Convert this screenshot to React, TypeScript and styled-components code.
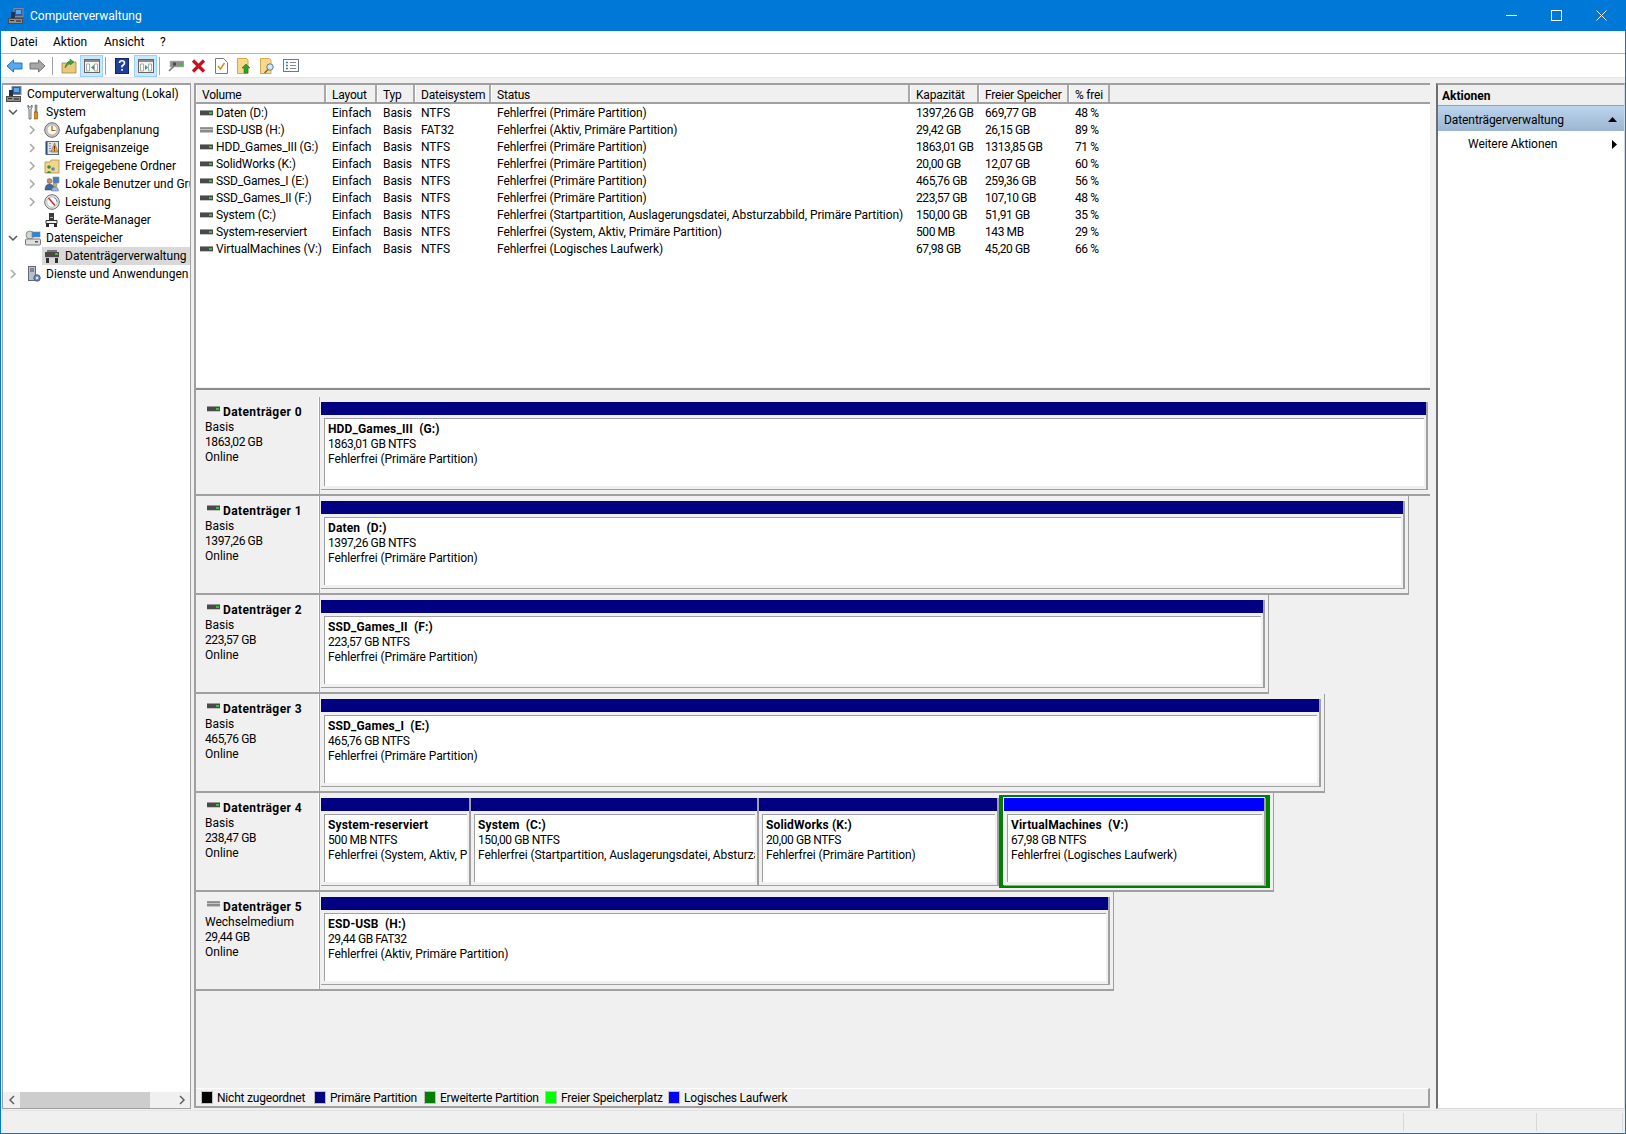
import React from "react";
import styled, { createGlobalStyle } from "styled-components";

const Global = createGlobalStyle`
  html, body { margin: 0; padding: 0; background: #f0f0f0; }
  * { box-sizing: border-box; }
  body { font-family: Roboto, "Liberation Sans", sans-serif; font-size: 12px; color: #000; overflow: hidden; }
`;

const Win = styled.div`
  width: 1626px; height: 1134px; display: flex; flex-direction: column;
  border: 1px solid #0078d7; border-top: 0; background: #f0f0f0;
`;
const TitleBar = styled.div`
  height: 31px; background: #0078d7; color: #fff; display: flex; align-items: center;
  margin: 0 -1px; padding-left: 8px; flex: none;
`;
const TitleText = styled.span` margin-left: 6px; flex: 1; font-size: 12px; `;
const WinBtn = styled.div`
  width: 45px; height: 31px; display: flex; align-items: center; justify-content: center;
`;
const WinBtns = styled.div` display: flex; margin-right: 2px; `;
const MenuBar = styled.div`
  height: 23px; background: #fff; border-bottom: 1px solid #b4b4c0; display: flex; align-items: center;
  padding-left: 9px; flex: none;
`;
const MenuItem = styled.span<{ $w: number }>` width: ${(p) => p.$w}px; `;
const ToolBar = styled.div`
  height: 23px; background: #fff; display: flex; align-items: center; padding-left: 2px; flex: none;
`;
const ToolBtn = styled.div<{ $w?: number; $on?: boolean }>`
  width: ${(p) => p.$w ?? 23}px; height: 22px; display: flex; align-items: center; justify-content: center; flex: none;
  background: ${(p) => (p.$on ? "#cce8ff" : "transparent")};
  border: 1px solid ${(p) => (p.$on ? "#99d1ff" : "transparent")};
`;
const ToolSep = styled.div<{ $l?: number }>` width: 1px; height: 18px; background: #a0a0a0; margin: 0 4px 0 ${(p) => p.$l ?? 2}px; flex: none; `;
const Main = styled.div`
  flex: 1; display: flex; padding: 5px 1px 1px 1px; min-height: 0; border-top: 1px solid #e6e6e6;
`;
const TreePane = styled.div`
  width: 189px; flex: none; display: flex; flex-direction: column; background: #fff;
  border-top: 2px solid #a0a0a0; border-left: 1px solid #a0a0a0; border-right: 1px solid #a0a0a0;
  border-bottom: 1px solid #a0a0a0; overflow: hidden;
`;
const TreeBody = styled.div` flex: 1; min-height: 0; `;
const TreeRow = styled.div<{ $pad: number }>`
  height: 18px; display: flex; align-items: center; padding-left: ${(p) => p.$pad}px; white-space: nowrap; overflow: hidden;
`;
const Chevron = styled.div` width: 20px; flex: none; display: flex; align-items: center; padding-left: 3px; height: 18px; `;
const TreeItem = styled.div<{ $sel?: boolean }>`
  flex: 1; min-width: 0; display: flex; align-items: center; gap: 5px; height: 18px; margin-left: -2px; padding-left: 2px;
  background: ${(p) => (p.$sel ? "#d9d9d9" : "transparent")}; overflow: hidden;
`;
const TreeScroll = styled.div` height: 16px; display: flex; align-items: center; background: #f0f0f0; flex: none; `;
const ScrollArrow = styled.div` width: 17px; height: 16px; display: flex; align-items: center; justify-content: center; flex: none; `;
const ScrollTrack = styled.div` flex: 1; height: 16px; `;
const ScrollThumb = styled.div` width: 130px; height: 16px; background: #cdcdcd; `;

const Center = styled.div`
  flex: none; width: 1236px; margin: 0 0 1px 3px; display: flex; flex-direction: column;
  border-left: 2px solid #a0a0a0; border-top: 2px solid #a0a0a0;
`;
const ListPane = styled.div` height: 302px; background: #fff; flex: none; display: flex; flex-direction: column; `;
const Cols = "130px 51px 38px 76px 419px 69px 90px 41px 1fr";
const ListHead = styled.div`
  display: grid; grid-template-columns: ${Cols}; height: 19px; background: #f0f0f0; border-bottom: 2px solid #a0a0a0; flex: none;
`;
const HeadCell = styled.div`
  padding: 2px 0 0 5px; display: flex; align-items: center; border-right: 2px solid #a8a8a8; border-left: 1px solid #fff;
  white-space: nowrap; overflow: hidden; letter-spacing: -0.2px;
`;
const HeadFill = styled.div``;
const ListRow = styled.div` display: grid; grid-template-columns: ${Cols}; height: 17px; align-items: center; `;
const Cell = styled.div<{ $tight?: boolean }>`
  padding-left: 6px; white-space: nowrap; overflow: hidden; letter-spacing: ${(p) => (p.$tight ? "-0.4px" : "-0.08px")};
`;
const VolCell = styled.div` padding-left: 4px; display: flex; align-items: center; gap: 3px; white-space: nowrap; overflow: hidden; letter-spacing: -0.15px; `;
const ListBody = styled.div` flex: 1; `;
const Split = styled.div` height: 3px; background: #f0f0f0; border-bottom: 2px solid #8c8c8c; flex: none; `;
const Graph = styled.div` flex: 1; background: #f0f0f0; padding-top: 7px; min-height: 0; overflow: hidden; `;
const DiskRow = styled.div` height: 99px; display: flex; `;
const DiskLabel = styled.div`
  width: 124px; flex: none; height: 99px; padding: 6px 0 0 9px; border-right: 1px solid #a0a0a0; border-bottom: 2px solid #a0a0a0;
  box-shadow: inset -1px 0 0 #fff; line-height: 15px;
`;
const DiskName = styled.div` display: flex; align-items: center; gap: 3px; font-weight: 700; padding-left: 2px; height: 18px; margin-bottom: -1px; letter-spacing: 0.4px; `;
const DiskIcon = styled.span` display: block; margin-bottom: 6px; `;
const DiskSize = styled.div` letter-spacing: -0.4px; `;
const PartArea = styled.div<{ $w: number }>`
  width: ${(p) => p.$w}px; height: 99px; flex: none; padding: 5px 3px 4px 1px; display: flex;
  border-right: 1px solid #a0a0a0; border-bottom: 2px solid #a0a0a0;
`;
const Partition = styled.div<{ $w?: number; $sel?: boolean }>`
  ${(p) => (p.$w ? `width:${p.$w}px;flex:none;` : "flex:1;")}
  display: flex; flex-direction: column; border-right: 2px solid #a0a0a0; border-bottom: 1px solid #a0a0a0; min-width: 0;
  ${(p) =>
    p.$sel
      ? `margin: 0 4px 0 5px; box-shadow: -1px -1px 0 #fff, -5px -3px 0 #008000, 4px -3px 0 #008000, -5px 2px 0 #008000, 4px 2px 0 #008000;
         background: #f0f0f0;`
      : ""}
`;
const Bar = styled.div<{ $c: string }>` height: 13px; background: ${(p) => p.$c}; flex: none; `;
const PartBox = styled.div`
  flex: 1; margin: 3px 2px 3px 3px; background: #fff; border-top: 1px solid #a0a0a0; border-left: 1px solid #a0a0a0;
  padding: 3px 0 0 3px; line-height: 15px; white-space: nowrap; overflow: hidden; min-width: 0; letter-spacing: -0.08px;
`;
const PartTitle = styled.div` font-weight: 700; white-space: pre; letter-spacing: 0.15px; `;
const PartSize = styled.div` letter-spacing: -0.4px; `;
const Legend = styled.div`
  height: 20px; display: flex; align-items: center; background: #f0f0f0; padding-left: 5px; flex: none; letter-spacing: -0.2px;
  border-top: 1px solid #fff; border-bottom: 2px solid #a0a0a0; border-right: 2px solid #a0a0a0;
`;
const Swatch = styled.span<{ $c: string }>`
  width: 12px; height: 13px; background: ${(p) => p.$c}; border: 1px solid #c0c0c0; flex: none; margin-right: 4px;
`;
const LegendText = styled.span<{ $w: number }>` width: ${(p) => p.$w}px; white-space: nowrap; flex: none; `;

const Actions = styled.div`
  width: 189px; flex: none; margin-left: 6px; display: flex; flex-direction: column; background: #fff;
  border-top: 2px solid #a0a0a0; border-left: 2px solid #6e6e6e; border-bottom: 1px solid #d8d8d8; border-right: 1px solid #d8d8d8;
`;
const ActHead = styled.div` height: 21px; background: #efefef; font-weight: 700; display: flex; align-items: center; padding: 2px 0 0 4px; border-bottom: 1px solid #a0a0a0; flex: none; `;
const ActSel = styled.div`
  height: 25px; background: linear-gradient(#bcd4ec, #9cb5d1); display: flex; align-items: center; justify-content: space-between; padding: 2px 7px 0 6px; flex: none; letter-spacing: -0.08px;
`;
const ActItem = styled.div` height: 24px; display: flex; align-items: center; justify-content: space-between; padding: 2px 7px 0 30px; flex: none; letter-spacing: -0.08px; `;
const Status = styled.div` height: 23px; flex: none; display: flex; border-top: 1px solid #e4e4e4; background: #f0f0f0; `;
const StatusCell = styled.div<{ $w?: number }>`
  ${(p) => (p.$w ? `width:${p.$w}px;flex:none;` : "flex:1;")} border-right: 1px solid #d8d8d8; margin: 2px 0;
`;

const Svg = styled.svg` flex: none; display: block; `;

const Drive = ({ usb }: { usb?: boolean }) => (
  <Svg width="13" height="8" viewBox="0 0 13 8">
    <rect x="0" y="1" width="13" height="1" fill="#9a9a9a" />
    <rect x="0" y="2" width="13" height="4" fill={usb ? "#8a8a8a" : "#4a4a4a"} />
    {usb && <rect x="0" y="3" width="13" height="1" fill="#c4c4c4" />}
    {!usb && <rect x="9" y="3" width="3" height="2" fill="#35c235" />}
    <rect x="0" y="6" width="13" height="1" fill="#c4c4c4" />
  </Svg>
);

const Chev = ({ open }: { open?: boolean }) => (
  <Svg width="10" height="10" viewBox="0 0 10 10" fill="none" stroke={open ? "#555" : "#a6a6a6"} strokeWidth="1.5">
    <path d={open ? "M1 3 L5 7 L9 3" : "M3 1 L7 5 L3 9"} />
  </Svg>
);

const Computer = () => (
  <Svg width="16" height="16" viewBox="0 0 16 16">
    <rect x="6" y="0.5" width="9" height="8" fill="#2d5ea8" stroke="#7f8aa0" />
    <rect x="8" y="2" width="5" height="4" fill="#5aa7ee" />
    <path d="M3 4 h4 v6 h-4 z" fill="#22324f" />
    <rect x="0.5" y="10.5" width="14" height="5" fill="#8d8d8d" stroke="#4b4b4b" />
    <rect x="2" y="12" width="4" height="1" fill="#333" />
    <rect x="8" y="12" width="5" height="2" fill="#555" />
  </Svg>
);
const Tools = () => (
  <Svg width="16" height="16" viewBox="0 0 16 16">
    <path d="M3 1 v3 l1 1 v10 h2 V5 l1 -1 V1 L6 3 H4 Z" fill="#e4e4e4" stroke="#555" strokeWidth=".8" />
    <rect x="10" y="1" width="2" height="7" fill="#999" stroke="#666" strokeWidth=".5" />
    <rect x="9.5" y="8" width="3" height="7" fill="#e08a1e" stroke="#8a4e0b" strokeWidth=".6" />
  </Svg>
);
const Clock = () => (
  <Svg width="16" height="16" viewBox="0 0 16 16">
    <circle cx="8" cy="8" r="7.3" fill="#c9c9c9" stroke="#6e6e6e" />
    <circle cx="8" cy="8" r="5" fill="#fbf6e6" stroke="#9a9a9a" strokeWidth=".6" />
    <path d="M8 4 V8.5 H11.5" stroke="#8a6a2a" strokeWidth="1.2" fill="none" />
  </Svg>
);
const EventLog = () => (
  <Svg width="16" height="16" viewBox="0 0 16 16">
    <rect x="2.5" y="1.5" width="12" height="13" fill="#dfe3ea" stroke="#5a6a85" />
    <path d="M2.5 1.5 v13" stroke="#2b4a78" strokeWidth="2" />
    <path d="M5 3.5 h2 M5 6 h2 M5 8.5 h2 M5 11 h2" stroke="#7d8ba5" />
    <path d="M10.5 3 L14 12 H7 Z" fill="#e9b23a" stroke="#8a5a10" strokeWidth=".6" />
    <rect x="10" y="6" width="1" height="3.5" fill="#5a2a00" />
    <rect x="10" y="10.3" width="1" height="1" fill="#5a2a00" />
  </Svg>
);
const SharedFolder = () => (
  <Svg width="16" height="16" viewBox="0 0 16 16">
    <path d="M1 4 h5 l1 -2 h8 v13 H1 Z" fill="#f2d68b" stroke="#b08f45" strokeWidth=".8" />
    <circle cx="5" cy="9" r="1.8" fill="#3d8d3d" />
    <circle cx="9" cy="11" r="1.8" fill="#5a86c8" />
    <path d="M2.5 15 q2.5 -4 5 0" fill="#3d8d3d" />
  </Svg>
);
const Users = () => (
  <Svg width="16" height="16" viewBox="0 0 16 16">
    <rect x="9" y="1" width="6" height="6" fill="#4a7cc0" stroke="#7d8aa8" strokeWidth=".6" />
    <circle cx="5.5" cy="5" r="2.4" fill="#c98f5a" stroke="#63401f" strokeWidth=".5" />
    <path d="M1 14 q0 -6 4.5 -6 q4.5 0 4.5 6 z" fill="#3d6a9d" stroke="#22395a" strokeWidth=".5" />
    <circle cx="11" cy="9" r="2" fill="#d6a878" stroke="#63401f" strokeWidth=".4" />
    <path d="M7.5 15 q0 -4 3.5 -4 q3.5 0 3.5 4 z" fill="#9bb6d6" stroke="#4d6a92" strokeWidth=".5" />
  </Svg>
);
const Gauge = () => (
  <Svg width="16" height="16" viewBox="0 0 16 16">
    <circle cx="8" cy="8" r="7.3" fill="#e6e6e6" stroke="#6a6a6a" />
    <circle cx="8" cy="8" r="5.2" fill="#fff" stroke="#a0a0a0" strokeWidth=".6" />
    <path d="M4.5 4 L11 11.5" stroke="#d21f1f" strokeWidth="1.4" />
    <path d="M10 3.5 A5 5 0 0 1 13 8" stroke="#7094c8" strokeWidth="1" fill="none" />
  </Svg>
);
const Device = () => (
  <Svg width="16" height="16" viewBox="0 0 16 16">
    <rect x="5" y="1" width="5" height="7" fill="#3a3a3a" />
    <rect x="6" y="5" width="3" height="1" fill="#bbb" />
    <path d="M2 8.5 h11 v3 h-11 z" fill="#efefef" stroke="#333" />
    <rect x="2" y="11.5" width="3" height="3.5" fill="#2a2a2a" />
    <rect x="10" y="11.5" width="3" height="3.5" fill="#2a2a2a" />
  </Svg>
);
const Storage = () => (
  <Svg width="16" height="16" viewBox="0 0 16 16">
    <circle cx="5" cy="5" r="4" fill="#cfd6cf" stroke="#6b786b" strokeWidth=".7" />
    <rect x="7" y="2" width="8" height="5" fill="#2f86d8" stroke="#71809a" strokeWidth=".6" />
    <rect x="0.5" y="9" width="15" height="6" rx="1" fill="#dedede" stroke="#777" />
    <rect x="10" y="11" width="3" height="1.5" fill="#555" />
  </Svg>
);
const DiskMgmt = () => (
  <Svg width="16" height="16" viewBox="0 0 16 16">
    <rect x="3" y="2" width="10" height="2" fill="#777" />
    <rect x="1" y="4" width="14" height="5" fill="#4a4a4a" />
    <rect x="11" y="5" width="3" height="2" fill="#35c235" />
    <rect x="1" y="9" width="14" height="1" fill="#bdbdbd" />
    <rect x="2" y="10" width="3" height="5" fill="#2f2f2f" />
    <rect x="11" y="10" width="3" height="5" fill="#2f2f2f" />
  </Svg>
);
const Services = () => (
  <Svg width="16" height="16" viewBox="0 0 16 16">
    <rect x="3.5" y="0.5" width="7" height="14" fill="#b9c0cb" stroke="#646a75" />
    <path d="M5 3 h4 M5 5 h4" stroke="#4a4f58" />
    <circle cx="12" cy="12" r="3.2" fill="#6f8fb8" stroke="#3f5f88" />
    <circle cx="12" cy="12" r="1.2" fill="#e8eef6" />
  </Svg>
);

const ArrowIcon = ({ dir, c, s }: { dir: "l" | "r"; c: string; s: string }) => (
  <Svg width="17" height="14" viewBox="0 0 17 14">
    <path d={dir === "l" ? "M1 7 L7.5 1 V4 H16 V10 H7.5 V13 Z" : "M16 7 L9.5 1 V4 H1 V10 H9.5 V13 Z"} fill={c} stroke={s} />
  </Svg>
);
const FolderUp = () => (
  <Svg width="16" height="16" viewBox="0 0 16 16">
    <path d="M1 5 h5 l1 -1 h8 v11 H1 Z" fill="#e9c97c" stroke="#a5884a" strokeWidth=".8" />
    <path d="M4 10 Q5 4 9 3 V1 l4 3 -4 3 V5 Q7 6 4 10 Z" fill="#3f9f3f" stroke="#1f6f1f" strokeWidth=".5" />
  </Svg>
);
const PaneIcon = ({ right }: { right?: boolean }) => (
  <Svg width="16" height="14" viewBox="0 0 16 14">
    <rect x=".5" y=".5" width="15" height="13" fill="#f4f4f4" stroke="#666" />
    <rect x="1" y="1" width="14" height="2" fill="#8a8a8a" />
    <path d="M2.5 5 h3 v7 h-3 z M10.5 5 h3 v7 h-3 z" fill="#fff" stroke="#8a8a8a" strokeWidth=".7" />
    <path d={right ? "M7 6 L10 8.5 L7 11 Z" : "M10 6 L7 8.5 L10 11 Z"} fill="#2fa84a" />
  </Svg>
);
const HelpIcon = () => (
  <Svg width="14" height="16" viewBox="0 0 14 16">
    <rect x=".5" y=".5" width="13" height="15" fill="#1f3f9a" stroke="#14266a" />
    <path d="M4.5 5 q0 -2.2 2.5 -2.2 q2.5 0 2.5 2.2 q0 1.5 -2.5 3 v1.5" fill="none" stroke="#fff" strokeWidth="1.6" />
    <rect x="6.2" y="11" width="1.7" height="1.7" fill="#fff" />
  </Svg>
);
const DiskCon = () => (
  <Svg width="16" height="14" viewBox="0 0 16 14">
    <rect x="2" y="2" width="14" height="6" fill="#8d8d8d" stroke="#bbb" strokeWidth=".6" />
    <rect x="12" y="4" width="2.5" height="2" fill="#35c235" />
    <rect x="5" y="3.5" width="3" height="3" fill="#4a4a4a" />
    <path d="M6 7 L1 12" stroke="#777" strokeWidth="1.6" />
  </Svg>
);
const RedX = () => (
  <Svg width="15" height="14" viewBox="0 0 15 14">
    <path d="M2 1.5 L13 12.5 M13 1.5 L2 12.5" stroke="#c4121f" strokeWidth="3.2" />
  </Svg>
);
const DocCheck = () => (
  <Svg width="13" height="16" viewBox="0 0 13 16">
    <path d="M.5 .5 h8 l4 4 v11 h-12 z" fill="#fff" stroke="#7a7a7a" />
    <path d="M3 8 l2.5 3 l4 -6" fill="none" stroke="#d98a1e" strokeWidth="1.4" />
  </Svg>
);
const YellowDoc = ({ search }: { search?: boolean }) => (
  <Svg width="15" height="16" viewBox="0 0 15 16">
    <path d="M.5 .5 h9 l1.5 1.5 v13.5 h-10.5 z" fill="#f7d88c" stroke="#d9a94a" />
    {search ? (
      <>
        <circle cx="10" cy="9" r="3.2" fill="#d8e6f6" stroke="#5a7aa0" />
        <path d="M8 11.5 L4.5 15" stroke="#8a6a3a" strokeWidth="1.6" />
      </>
    ) : (
      <path d="M9 6 L13 10 H11 V15 H7 V10 H5 Z" fill="#29a329" stroke="#146614" strokeWidth=".5" />
    )}
  </Svg>
);
const ListIcon = () => (
  <Svg width="16" height="13" viewBox="0 0 16 13">
    <rect x=".5" y=".5" width="15" height="12" fill="#fff" stroke="#6a7a8a" />
    <path d="M3 3.5 h2 M3 6.5 h2 M3 9.5 h2" stroke="#3a7ac0" strokeWidth="1.4" />
    <path d="M7 3.5 h6 M7 6.5 h6 M7 9.5 h6" stroke="#8a8a8a" />
  </Svg>
);
const Chev2 = ({ l }: { l?: boolean }) => (
  <Svg width="8" height="10" viewBox="0 0 8 10" fill="none" stroke="#606060" strokeWidth="1.5">
    <path d={l ? "M6 1 L2 5 L6 9" : "M2 1 L6 5 L2 9"} />
  </Svg>
);

const tree: { t: string; lvl: 0 | 1 | 2; chev?: "o" | "c"; ic: React.ReactNode; sel?: boolean }[] = [
  { t: "Computerverwaltung (Lokal)", lvl: 0, ic: <Computer /> },
  { t: "System", lvl: 1, chev: "o", ic: <Tools /> },
  { t: "Aufgabenplanung", lvl: 2, chev: "c", ic: <Clock /> },
  { t: "Ereignisanzeige", lvl: 2, chev: "c", ic: <EventLog /> },
  { t: "Freigegebene Ordner", lvl: 2, chev: "c", ic: <SharedFolder /> },
  { t: "Lokale Benutzer und Gruppen", lvl: 2, chev: "c", ic: <Users /> },
  { t: "Leistung", lvl: 2, chev: "c", ic: <Gauge /> },
  { t: "Geräte-Manager", lvl: 2, ic: <Device /> },
  { t: "Datenspeicher", lvl: 1, chev: "o", ic: <Storage /> },
  { t: "Datenträgerverwaltung", lvl: 2, ic: <DiskMgmt />, sel: true },
  { t: "Dienste und Anwendungen", lvl: 1, chev: "c", ic: <Services /> },
];

const heads = ["Volume", "Layout", "Typ", "Dateisystem", "Status", "Kapazität", "Freier Speicher", "% frei"];
const vols: string[][] = [
  ["Daten (D:)", "NTFS", "Fehlerfrei (Primäre Partition)", "1397,26 GB", "669,77 GB", "48 %"],
  ["ESD-USB (H:)", "FAT32", "Fehlerfrei (Aktiv, Primäre Partition)", "29,42 GB", "26,15 GB", "89 %"],
  ["HDD_Games_III (G:)", "NTFS", "Fehlerfrei (Primäre Partition)", "1863,01 GB", "1313,85 GB", "71 %"],
  ["SolidWorks (K:)", "NTFS", "Fehlerfrei (Primäre Partition)", "20,00 GB", "12,07 GB", "60 %"],
  ["SSD_Games_I (E:)", "NTFS", "Fehlerfrei (Primäre Partition)", "465,76 GB", "259,36 GB", "56 %"],
  ["SSD_Games_II (F:)", "NTFS", "Fehlerfrei (Primäre Partition)", "223,57 GB", "107,10 GB", "48 %"],
  ["System (C:)", "NTFS", "Fehlerfrei (Startpartition, Auslagerungsdatei, Absturzabbild, Primäre Partition)", "150,00 GB", "51,91 GB", "35 %"],
  ["System-reserviert", "NTFS", "Fehlerfrei (System, Aktiv, Primäre Partition)", "500 MB", "143 MB", "29 %"],
  ["VirtualMachines (V:)", "NTFS", "Fehlerfrei (Logisches Laufwerk)", "67,98 GB", "45,20 GB", "66 %"],
];

type Part = { title: string; size: string; status: string; w?: number; logical?: boolean };
const disks: { name: string; kind: string; size: string; w: number; usb?: boolean; parts: Part[] }[] = [
  { name: "Datenträger 0", kind: "Basis", size: "1863,02 GB", w: 1112, parts: [{ title: "HDD_Games_III  (G:)", size: "1863,01 GB NTFS", status: "Fehlerfrei (Primäre Partition)" }] },
  { name: "Datenträger 1", kind: "Basis", size: "1397,26 GB", w: 1089, parts: [{ title: "Daten  (D:)", size: "1397,26 GB NTFS", status: "Fehlerfrei (Primäre Partition)" }] },
  { name: "Datenträger 2", kind: "Basis", size: "223,57 GB", w: 949, parts: [{ title: "SSD_Games_II  (F:)", size: "223,57 GB NTFS", status: "Fehlerfrei (Primäre Partition)" }] },
  { name: "Datenträger 3", kind: "Basis", size: "465,76 GB", w: 1005, parts: [{ title: "SSD_Games_I  (E:)", size: "465,76 GB NTFS", status: "Fehlerfrei (Primäre Partition)" }] },
  {
    name: "Datenträger 4", kind: "Basis", size: "238,47 GB", w: 954, parts: [
      { title: "System-reserviert", size: "500 MB NTFS", status: "Fehlerfrei (System, Aktiv, Primäre Partition)", w: 150 },
      { title: "System  (C:)", size: "150,00 GB NTFS", status: "Fehlerfrei (Startpartition, Auslagerungsdatei, Absturzabbild, Primäre Partition)", w: 288 },
      { title: "SolidWorks (K:)", size: "20,00 GB NTFS", status: "Fehlerfrei (Primäre Partition)", w: 240 },
      { title: "VirtualMachines  (V:)", size: "67,98 GB NTFS", status: "Fehlerfrei (Logisches Laufwerk)", logical: true },
    ],
  },
  { name: "Datenträger 5", kind: "Wechselmedium", size: "29,44 GB", usb: true, w: 794, parts: [{ title: "ESD-USB  (H:)", size: "29,44 GB FAT32", status: "Fehlerfrei (Aktiv, Primäre Partition)" }] },
];

const legend: [string, string, number][] = [
  ["#000000", "Nicht zugeordnet", 97],
  ["#000080", "Primäre Partition", 94],
  ["#008000", "Erweiterte Partition", 105],
  ["#00ff00", "Freier Speicherplatz", 107],
  ["#0000ff", "Logisches Laufwerk", 110],
];

export default function App() {
  return (
    <Win>
      <Global />
      <TitleBar>
        <Computer />
        <TitleText>Computerverwaltung</TitleText>
        <WinBtns>
          <WinBtn><Svg width="11" height="11" viewBox="0 0 11 11"><path d="M0 5.5 H11" stroke="#fff" /></Svg></WinBtn>
          <WinBtn><Svg width="11" height="11" viewBox="0 0 11 11"><rect x=".5" y=".5" width="10" height="10" fill="none" stroke="#fff" /></Svg></WinBtn>
          <WinBtn><Svg width="11" height="11" viewBox="0 0 11 11"><path d="M.5 .5 L10.5 10.5 M10.5 .5 L.5 10.5" stroke="#fff" /></Svg></WinBtn>
        </WinBtns>
      </TitleBar>
      <MenuBar>
        <MenuItem $w={43}>Datei</MenuItem>
        <MenuItem $w={51}>Aktion</MenuItem>
        <MenuItem $w={56}>Ansicht</MenuItem>
        <MenuItem $w={10}>?</MenuItem>
      </MenuBar>
      <ToolBar>
        <ToolBtn><ArrowIcon dir="l" c="#59a9ee" s="#1f74c4" /></ToolBtn>
        <ToolBtn><ArrowIcon dir="r" c="#a8a8a8" s="#707070" /></ToolBtn>
        <ToolSep $l={3} />
        <ToolBtn><FolderUp /></ToolBtn>
        <ToolBtn $on><PaneIcon /></ToolBtn>
        <ToolSep />
        <ToolBtn $w={24}><HelpIcon /></ToolBtn>
        <ToolBtn $on><PaneIcon right /></ToolBtn>
        <ToolSep />
        <ToolBtn><DiskCon /></ToolBtn>
        <ToolBtn><RedX /></ToolBtn>
        <ToolBtn><DocCheck /></ToolBtn>
        <ToolBtn><YellowDoc /></ToolBtn>
        <ToolBtn><YellowDoc search /></ToolBtn>
        <ToolBtn><ListIcon /></ToolBtn>
      </ToolBar>
      <Main>
        <TreePane>
          <TreeBody>
            {tree.map((r) => (
              <TreeRow key={r.t} $pad={r.lvl === 0 ? 3 : r.lvl === 1 ? 2 : 21}>
                {r.lvl > 0 && <Chevron>{r.chev && <Chev open={r.chev === "o"} />}</Chevron>}
                <TreeItem $sel={r.sel}>
                  {r.ic}
                  <span>{r.t}</span>
                </TreeItem>
              </TreeRow>
            ))}
          </TreeBody>
          <TreeScroll>
            <ScrollArrow><Chev2 l /></ScrollArrow>
            <ScrollThumb />
            <ScrollTrack />
            <ScrollArrow><Chev2 /></ScrollArrow>
          </TreeScroll>
        </TreePane>
        <Center>
          <ListPane>
            <ListHead>
              {heads.map((h) => <HeadCell key={h}>{h}</HeadCell>)}
              <HeadFill />
            </ListHead>
            <ListBody>
              {vols.map((v) => (
                <ListRow key={v[0]}>
                  <VolCell><Drive usb={v[0].startsWith("ESD")} /><span>{v[0]}</span></VolCell>
                  <Cell>Einfach</Cell>
                  <Cell>Basis</Cell>
                  <Cell>{v[1]}</Cell>
                  <Cell>{v[2]}</Cell>
                  <Cell $tight>{v[3]}</Cell>
                  <Cell $tight>{v[4]}</Cell>
                  <Cell $tight>{v[5]}</Cell>
                </ListRow>
              ))}
            </ListBody>
          </ListPane>
          <Split />
          <Graph>
            {disks.map((d) => (
              <DiskRow key={d.name}>
                <DiskLabel>
                  <DiskName><DiskIcon><Drive usb={d.usb} /></DiskIcon>{d.name}</DiskName>
                  <div>{d.kind}</div>
                  <DiskSize>{d.size}</DiskSize>
                  <div>Online</div>
                </DiskLabel>
                <PartArea $w={d.w}>
                  {d.parts.map((p) => (
                    <Partition key={p.title} $w={p.w} $sel={p.logical}>
                      <Bar $c={p.logical ? "#0000ff" : "#000080"} />
                      <PartBox>
                        <PartTitle>{p.title}</PartTitle>
                        <PartSize>{p.size}</PartSize>
                        <div>{p.status}</div>
                      </PartBox>
                    </Partition>
                  ))}
                </PartArea>
              </DiskRow>
            ))}
          </Graph>
          <Legend>
            {legend.map(([c, t, w]) => (
              <React.Fragment key={t}>
                <Swatch $c={c} />
                <LegendText $w={w}>{t}</LegendText>
              </React.Fragment>
            ))}
          </Legend>
        </Center>
        <Actions>
          <ActHead>Aktionen</ActHead>
          <ActSel>
            <span>Datenträgerverwaltung</span>
            <Svg width="9" height="5" viewBox="0 0 9 5"><path d="M0 5 L4.5 0 L9 5 Z" fill="#000" /></Svg>
          </ActSel>
          <ActItem>
            <span>Weitere Aktionen</span>
            <Svg width="5" height="9" viewBox="0 0 5 9"><path d="M0 0 L5 4.5 L0 9 Z" fill="#000" /></Svg>
          </ActItem>
        </Actions>
      </Main>
      <Status>
        <StatusCell $w={1403} />
        <StatusCell $w={133} />
        <StatusCell $w={86} />
      </Status>
    </Win>
  );
}
